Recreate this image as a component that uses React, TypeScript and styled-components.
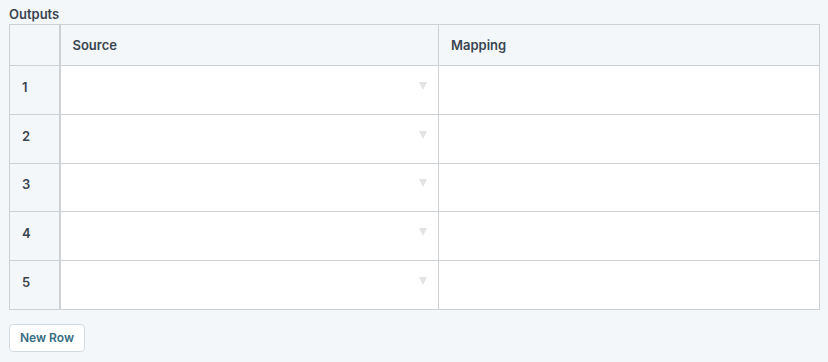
import * as React from 'react'
import styled, { createGlobalStyle } from 'styled-components'

const GlobalStyle = createGlobalStyle`
  html, body {
    margin: 0;
    padding: 0;
    background: #f4f7fa;
  }
  body {
    font-family: Inter, "Noto Sans", sans-serif;
    color: #3a4550;
  }
`

const Page = styled.div`
  width: 828px;
  height: 362px;
  padding: 6px 9px 0 9px;
  box-sizing: border-box;
`

const Label = styled.div`
  font-size: 13px;
  font-weight: 600;
  line-height: 16px;
  height: 18px;
  color: #3a4550;
`

const Grid = styled.table`
  width: 810px;
  border-collapse: collapse;
  table-layout: fixed;
  border: 1px solid #cdd1d4;
`

interface CellProps {
  $head?: boolean
  $index?: boolean
}

const Cell = styled.td<CellProps>`
  border: 1px solid #cdd1d4;
  padding: 0 12px;
  height: ${(p) => (p.$head ? '40px' : '47.8px')};
  background: ${(p) => (p.$head || p.$index ? '#f4f7fa' : '#ffffff')};
  font-size: 13px;
  font-weight: 600;
  color: #3a4550;
  text-align: left;
  vertical-align: middle;
  position: relative;
`

const SourceCell = styled(Cell)`
  border-left: 2px solid #cdd1d4;
`

const RowNumber = styled.span`
  display: block;
  line-height: 16px;
  margin-bottom: 6px;
`

const Caret = styled.span`
  position: absolute;
  right: 11px;
  top: 50%;
  margin-top: -8px;
  width: 0;
  height: 0;
  border-left: 4.5px solid transparent;
  border-right: 4.5px solid transparent;
  border-top: 8px solid #e1e3e5;
`

const Footer = styled.div`
  margin-top: 14px;
`

const Button = styled.button`
  height: 28px;
  width: 76px;
  padding: 0;
  border: 1px solid #d3dbe2;
  border-radius: 4px;
  background: #ffffff;
  color: #376c82;
  font-family: Inter, "Noto Sans", sans-serif;
  font-size: 12px;
  font-weight: 600;
  cursor: pointer;
`

const rows = [1, 2, 3, 4, 5]

export default function App(): JSX.Element {
  return (
    <Page>
      <GlobalStyle />
      <Label>Outputs</Label>
      <Grid>
        <colgroup>
          <col style={{ width: 50 }} />
          <col style={{ width: 379 }} />
          <col style={{ width: 381 }} />
        </colgroup>
        <thead>
          <tr>
            <Cell as="th" $head />
            <SourceCell as="th" $head>Source</SourceCell>
            <Cell as="th" $head>Mapping</Cell>
          </tr>
        </thead>
        <tbody>
          {rows.map((n) => (
            <tr key={n}>
              <Cell $index>
                <RowNumber>{n}</RowNumber>
              </Cell>
              <SourceCell>
                <Caret />
              </SourceCell>
              <Cell />
            </tr>
          ))}
        </tbody>
      </Grid>
      <Footer>
        <Button>New Row</Button>
      </Footer>
    </Page>
  )
}
